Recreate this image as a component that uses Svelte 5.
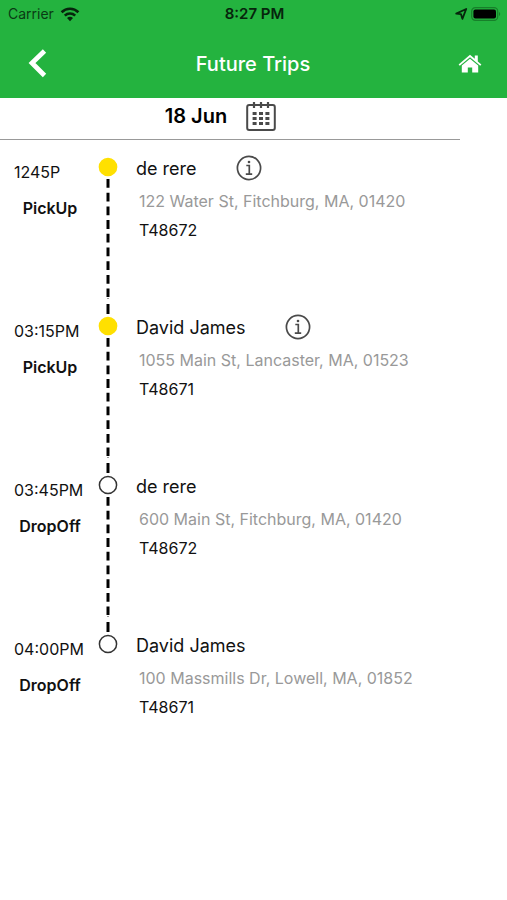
<script>
  const trips = [
    { time: '1245P', kind: 'PickUp', name: 'de rere', address: '122 Water St, Fitchburg, MA, 01420', ticket: 'T48672' },
    { time: '03:15PM', kind: 'PickUp', name: 'David James', address: '1055 Main St, Lancaster, MA, 01523', ticket: 'T48671' },
    { time: '03:45PM', kind: 'DropOff', name: 'de rere', address: '600 Main St, Fitchburg, MA, 01420', ticket: 'T48672' },
    { time: '04:00PM', kind: 'DropOff', name: 'David James', address: '100 Massmills Dr, Lowell, MA, 01852', ticket: 'T48671' }
  ];
</script>

<div class="screen">
  <header>
    <div class="status">
      <div class="carrier">
        <span>Carrier</span>
        <svg width="20" height="16" viewBox="0 0 20 16" aria-hidden="true">
          <g fill="none" stroke="#06250c" stroke-width="2.6">
            <path d="M1.6 6.2a12 12 0 0 1 16.8 0" />
            <path d="M4.8 9.6a7.5 7.5 0 0 1 10.4 0" />
          </g>
          <path d="M10 15.2 7 12.1a4.3 4.3 0 0 1 6 0z" fill="#06250c" />
        </svg>
      </div>
      <span class="clock">8:27 PM</span>
      <div class="power">
        <svg width="14" height="14" viewBox="0 0 14 14" aria-hidden="true">
          <path d="M12.2 2 8.4 11.8 7 7.2 2.2 6.6z" fill="none" stroke="#06250c" stroke-width="1.8" stroke-linejoin="round" />
        </svg>
        <svg width="30" height="14" viewBox="0 0 30 14" aria-hidden="true">
          <rect x=".7" y=".7" width="26" height="12.6" rx="3.6" fill="none" stroke="#17802a" stroke-width="1.2" />
          <rect x="2.4" y="2.4" width="22.6" height="9.2" rx="2" fill="#000" />
          <path d="M28 5c1.6.6 1.6 3.4 0 4z" fill="#17802a" />
        </svg>
      </div>
    </div>
    <nav>
      <button class="icon" aria-label="Back">
        <svg width="20" height="30" viewBox="0 0 20 30"><path d="M16.5 2 4 14l12.5 12.500" fill="none" stroke="#fff" stroke-width="4.8" /></svg>
      </button>
      <h1>Future Trips</h1>
      <button class="icon" aria-label="Home">
        <svg width="24" height="20" viewBox="0 0 24 20" fill="#fff">
          <path d="M12 .8 .6 10.5l1.2 1.3L12 3.3l10.200 8.5 1.2-1.3L19.800 7.4V1.400h-3v3.4z" />
          <path d="M12 4.700 3.8 11.5V18.600h6v-5h4.400v5h6v-7.100z" />
        </svg>
      </button>
    </nav>
  </header>

  <main>
    <div class="date">
      <strong>18 Jun</strong>
      <button class="icon" aria-label="Choose date">
        <svg width="30" height="31" viewBox="0 0 30 31">
          <rect x="1.2" y="4" width="27.6" height="25" rx="2" fill="none" stroke="#4a4a4a" stroke-width="2" />
          <path d="M8 1v6M15 1v6M22 1v6" stroke="#4a4a4a" stroke-width="2.2" />
          {#each [12.5, 17.5, 22.500] as y}
            <path d={`M6.600 ${y}h16.800`} stroke="#4a4a4a" stroke-width="3" stroke-dasharray="4 2.4" />
          {/each}
        </svg>
      </button>
    </div>

    <ol>
      {#each trips as trip, i}
        <li>
          <div class="when">
            <time>{trip.time}</time>
            <strong>{trip.kind}</strong>
          </div>
          <div class="track">
            <svg class="stop" class:pickup={trip.kind === 'PickUp'} width="20" height="20" viewBox="0 0 20 20" aria-hidden="true">
              <circle cx="10" cy="10" r="8.6" />
            </svg>
            {#if i < trips.length - 1}
              <svg width="4" height="137" viewBox="0 0 4 137" aria-hidden="true">
                <path d="M2 0V118" stroke="#000" stroke-width="3" stroke-dasharray="8.8 4.9" />
                <path d="M2 119v1" stroke="#999" stroke-width="2" />
                <path d="M2 125v10" stroke="#000" stroke-width="3" />
              </svg>
            {/if}
          </div>
          <div class="details">
            <div class="who">
              <h2>{trip.name}</h2>
              {#if trip.kind === 'PickUp'}
                <button class="icon" aria-label="Trip information">
                  <svg width="26" height="26" viewBox="0 0 26 26" fill="none" stroke="#4a4a4a">
                    <circle cx="13" cy="13" r="11.6" stroke-width="1.7" />
                    <path d="M10.3 10.5h3v8.5M9.8 19.200h6.4" stroke-width="1.7" />
                    <circle cx="13" cy="7" r="1.3" fill="#4a4a4a" stroke="none" />
                  </svg>
                </button>
              {/if}
            </div>
            <p class="address">{trip.address}</p>
            <p>{trip.ticket}</p>
          </div>
        </li>
      {/each}
    </ol>
  </main>
</div>

<style>
  :global(body) {
    margin: 0;
    background: #fff;
  }
  .screen {
    min-height: 100vh;
    font-family: Inter, 'Liberation Sans', sans-serif;
    color: #111;
  }
  header {
    background: #24b33f;
  }
  .status {
    display: grid;
    grid-template-columns: 1fr auto 1fr;
    align-items: center;
    height: 27px;
    padding: 0 6px 0 8px;
    font-size: 14px;
    color: #0a3a14;
  }
  .carrier,
  .power {
    display: flex;
    align-items: center;
    gap: 6px;
  }
  .power {
    justify-content: flex-end;
    gap: 3px;
  }
  .clock {
    font-size: 15px;
    font-weight: 600;
    color: #06250c;
  }
  nav {
    display: flex;
    align-items: center;
    justify-content: space-between;
    height: 71px;
    padding: 2px 25px 0 28px;
    box-sizing: border-box;
  }
  h1 {
    margin: 0;
    font-size: 20px;
    font-weight: 500;
    color: #fff;
  }
  .icon {
    display: flex;
    padding: 0;
    border: 0;
    background: none;
    cursor: pointer;
  }
  .date {
    display: flex;
    align-items: center;
    justify-content: center;
    gap: 19px;
    height: 42px;
    margin-right: 47px;
    padding: 0 19px 5px 0;
    box-sizing: border-box;
    border-bottom: 1px solid #999;
    font-size: 20px;
    color: #000;
  }
  .date strong {
    font-weight: 600;
  }
  ol {
    margin: 0;
    padding: 15px 0 0;
    list-style: none;
  }
  li {
    display: grid;
    grid-template-columns: 98px 20px 1fr;
    height: 159px;
  }
  .when {
    display: flex;
    flex-direction: column;
    gap: 16px;
    padding: 7px 0 0 14px;
    font-size: 16px;
    line-height: 20px;
  }
  .when strong {
    width: 72px;
    font-weight: 600;
    text-align: center;
  }
  .track {
    display: flex;
    flex-direction: column;
    align-items: center;
    gap: 2px;
    padding-top: 2px;
  }
  .stop {
    flex: none;
    fill: none;
    stroke: #333;
    stroke-width: 1.5;
  }
  .stop.pickup {
    fill: #ffe000;
    stroke: #ffe000;
  }
  .details {
    padding-left: 18px;
    font-size: 16px;
  }
  .who {
    display: flex;
    align-items: center;
    gap: 39px;
    height: 26px;
  }
  h2 {
    margin: 0;
    font-size: 18px;
    font-weight: 400;
  }
  p {
    margin: 9px 0 0 3px;
    line-height: 20px;
  }
  .address {
    margin-top: 10px;
    color: #999;
  }
</style>
